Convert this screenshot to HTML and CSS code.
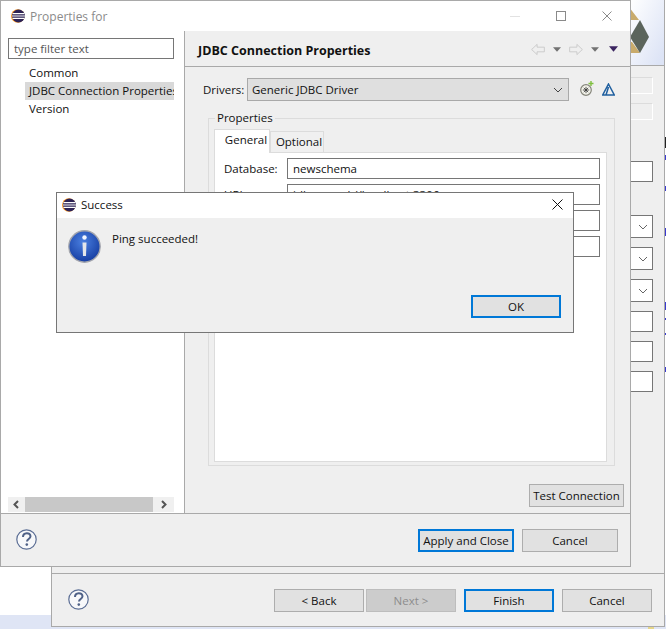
FILE: index.html
```html
<!DOCTYPE html>
<html lang="en">
<head>
  <meta charset="UTF-8" />
  <title>Properties for</title>
  <link rel="stylesheet" href="styles.css">
</head>
<body>
  <svg class="defs" width="0" height="0">
    <defs>
      <symbol id="eclipse" viewBox="0 0 14 14">
        <circle cx="6.8" cy="7" r="6.8" fill="#f7941e"/>
        <circle cx="7.5" cy="7" r="6.5" fill="#2c2255"/>
        <path d="M1.5 4.6h12M1 7h13M1.5 9.4h12" stroke="#fff" stroke-width="1.1"/>
      </symbol>
      <symbol id="help" viewBox="0 0 21 21">
        <circle cx="10.5" cy="10.5" r="9.7" fill="#f7f8fa" stroke="#5a6d94" stroke-width="1.2"/>
        <path d="M7 8c0-5 7.500-5 7.500-.7 0 2.700-3.500 2.700-3.500 5.200" fill="none" stroke="#4f6187" stroke-width="2"/>
        <circle cx="10.800" cy="15.600" r="1.300" fill="#4f6187"/>
      </symbol>
    </defs>
  </svg>

  <!-- Things peeking out behind the windows -->
  <div class="edge-bits"></div>
  <div class="tray-bit"></div>

  <!-- Wizard behind -->
  <div class="wizard">
    <div class="banner">
      <svg width="40" height="65" viewBox="0 0 40 65">
        <path d="M6 7l10 13H6zM6 42h3l8 11H6z" fill="#c9ab6c"/>
        <path d="M17 20l9 17-9 16-10-16z" fill="#5b645c"/>
      </svg>
    </div>
    <div class="wizard-body">
      <div class="wizard-fields">
        <span class="stub stub-off"></span>
        <span class="stub stub-off"></span>
        <span class="stub stub-first"></span>
        <span class="stub stub-combo"><svg width="10" height="6" viewBox="0 0 10 6"><path d="M1 1l4 4 4-4" fill="none" stroke="#666"/></svg></span>
        <span class="stub stub-combo"><svg width="10" height="6" viewBox="0 0 10 6"><path d="M1 1l4 4 4-4" fill="none" stroke="#666"/></svg></span>
        <span class="stub stub-combo"><svg width="10" height="6" viewBox="0 0 10 6"><path d="M1 1l4 4 4-4" fill="none" stroke="#666"/></svg></span>
        <span class="stub"></span>
        <span class="stub"></span>
        <span class="stub"></span>
      </div>
    </div>
    <div class="wizard-footer">
      <svg class="help"><use href="#help"/></svg>
      <div class="wizard-buttons">
        <button class="btn wiz-btn back-btn">&lt; Back</button>
        <button class="btn wiz-btn next-btn">Next &gt;</button>
        <button class="btn wiz-btn default finish-btn">Finish</button>
        <button class="btn wiz-btn">Cancel</button>
      </div>
    </div>
  </div>

  <!-- Properties dialog -->
  <div class="props">
    <div class="titlebar">
      <svg class="app-icon"><use href="#eclipse"/></svg>
      <span class="title-dim">Properties for</span>
      <div class="win-controls">
        <svg width="10" height="10" viewBox="0 0 10 10"><path d="M0 5.500h10" stroke="#e2e2e2"/></svg>
        <svg width="10" height="10" viewBox="0 0 10 10"><rect x=".5" y=".5" width="9" height="9" fill="none" stroke="#8a8a8a"/></svg>
        <svg width="10" height="10" viewBox="0 0 10 10"><path d="M.5.500l9 9M9.500.500l-9 9" stroke="#8a8a8a"/></svg>
      </div>
    </div>

    <div class="props-main">
      <div class="sidebar">
        <input class="filter" type="text" value="type filter text" />
        <ul class="tree">
          <li>Common</li>
          <li class="selected">JDBC Connection Properties</li>
          <li>Version</li>
        </ul>
        <div class="hscroll">
          <svg width="17" height="15" viewBox="0 0 17 15"><path d="M10 4L6.500 7.500 10 11" fill="none" stroke="#555" stroke-width="2"/></svg>
          <div class="hscroll-thumb"></div>
          <svg width="21" height="15" viewBox="0 0 21 15"><path d="M9 4l3.500 3.500L9 11" fill="none" stroke="#555" stroke-width="2"/></svg>
        </div>
      </div>

      <div class="page">
        <div class="page-head">
          <h1>JDBC Connection Properties</h1>
          <div class="nav-icons">
            <svg width="14" height="13" viewBox="0 0 15 13"><path d="M.7 6.500L6.500 1v3h7.800v5H6.500v3z" fill="none" stroke="#c9c9c9"/></svg>
            <svg class="tri" width="8" height="5" viewBox="0 0 9 5"><path d="M0 0h9L4.500 5z" fill="#727272"/></svg>
            <svg width="14" height="13" viewBox="0 0 15 13"><path d="M14.300 6.500L8.500 1v3H.7v5h7.800v3z" fill="none" stroke="#c9c9c9"/></svg>
            <svg class="tri" width="8" height="5" viewBox="0 0 9 5"><path d="M0 0h9L4.500 5z" fill="#727272"/></svg>
            <svg class="tri tri-last" width="9" height="6" viewBox="0 0 10 6"><path d="M0 0h10L5 6z" fill="#3b2560"/></svg>
          </div>
        </div>

        <div class="page-body">
          <div class="driver-row">
            <label>Drivers:</label>
            <div class="combo">
              <span>Generic JDBC Driver</span>
              <svg width="10" height="6" viewBox="0 0 10 6"><path d="M1 1l4 4 4-4" fill="none" stroke="#444"/></svg>
            </div>
            <svg class="driver-add" width="14" height="15" viewBox="0 0 14 15">
              <circle cx="6" cy="9" r="5.300" fill="#f4f4ec" stroke="#85857a" stroke-width="1.200"/>
              <path d="M6 5.800v6.400M2.800 9h6.400M3.800 6.800l4.400 4.400M8.200 6.800l-4.400 4.400" stroke="#333" stroke-width=".8"/>
              <path d="M11 0v5M8.500 2.500h5" stroke="#7fbf3f" stroke-width="1.400"/>
            </svg>
            <svg class="driver-edit" width="13" height="13" viewBox="0 0 13 13"><path d="M6.500 1L12.300 12H.7zM6.500 4L4 12" fill="none" stroke="#1f5f9f" stroke-width="1.500"/></svg>
          </div>

          <fieldset class="group">
            <legend>Properties</legend>
            <div class="tabs">
              <span class="tab active">General</span>
              <span class="tab">Optional</span>
            </div>
            <div class="tab-panel">
              <div class="form">
                <label>Database:</label><input type="text" value="newschema" />
                <label>URL:</label><input type="text" value="jdbc:mysql://localhost:3306" />
                <label>User name:</label><input type="text" />
                <label>Password:</label><input type="text" />
              </div>
            </div>
          </fieldset>

          <div class="test-row">
            <button class="btn test-btn">Test Connection</button>
          </div>
        </div>
      </div>
    </div>

    <div class="props-footer">
      <svg class="help"><use href="#help"/></svg>
      <div class="props-buttons">
        <button class="btn dlg-btn default">Apply and Close</button>
        <button class="btn dlg-btn">Cancel</button>
      </div>
    </div>
  </div>

  <!-- Message box -->
  <div class="msgbox">
    <div class="msg-title">
      <svg class="app-icon"><use href="#eclipse"/></svg>
      <span>Success</span>
      <svg class="msg-close" width="11" height="11" viewBox="0 0 11 11"><path d="M.5.500l10 10M10.500.500l-10 10" stroke="#111"/></svg>
    </div>
    <div class="msg-body">
      <div class="msg-row">
        <svg width="33" height="33" viewBox="0 0 33 33">
          <defs>
            <radialGradient id="infoBlue" cx="45%" cy="35%" r="70%">
              <stop offset="0" stop-color="#4a7fe0"/>
              <stop offset="1" stop-color="#12399e"/>
            </radialGradient>
          </defs>
          <circle cx="16.500" cy="16.500" r="15.700" fill="url(#infoBlue)" stroke="#a4a6ad" stroke-width="1.400"/>
          <circle cx="16.500" cy="7.500" r="2.200" fill="#f3f6ff"/>
          <path d="M14.500 12.500h4l-.5 13.500h-3z" fill="#e4e6ea"/>
        </svg>
        <p>Ping succeeded!</p>
      </div>
      <div class="msg-buttons">
        <button class="btn wiz-btn default">OK</button>
      </div>
    </div>
  </div>
</body>
</html>
```

FILE: styles.css
```css
* {
  box-sizing: border-box;
}
html, body {
  margin: 0;
  height: 100%;
}
body {
  position: relative;
  width: 666px;
  height: 629px;
  overflow: hidden;
  font-family: "Open Sans", "Noto Sans", Arial, sans-serif;
  font-size: 11.5px;
  color: #111;
  background: linear-gradient(#fff 615px, #dfe5f5 615px);
}
.defs {
  position: absolute;
}
.edge-bits {
  position: absolute;
  left: 665px;
  top: 0;
  width: 1px;
  height: 400px;
  background: linear-gradient(#fff 137px, #222 137px, #222 148px, #fff 148px,
    #fff 155px, #3a3ad0 155px, #3a3ad0 160px, #fff 160px,
    #fff 186px, #3a3ad0 186px, #3a3ad0 191px, #fff 191px,
    #fff 228px, #3a3ad0 228px, #3a3ad0 236px, #fff 236px,
    #fff 302px, #3a3ad0 302px, #3a3ad0 310px, #fff 310px,
    #fff 318px, #3a3ad0 318px, #3a3ad0 320px, #fff 320px,
    #fff 333px, #3a3ad0 333px, #3a3ad0 335px, #fff 335px,
    #fff 367px, #3a3ad0 367px, #3a3ad0 372px, #fff 372px);
}
.tray-bit {
  position: absolute;
  left: 648px;
  top: 626px;
  width: 6px;
  height: 3px;
  background: #e6d68a;
}

/* windows */
.wizard {
  position: absolute;
  left: 51px;
  top: 0;
  width: 614px;
  height: 627px;
  display: flex;
  flex-direction: column;
  background: #efefef;
  border: 1px solid #a9a9a9;
  border-top: 0;
}
.props {
  position: absolute;
  left: 0;
  top: 0;
  width: 631px;
  height: 567px;
  display: flex;
  flex-direction: column;
  background: #efefef;
  border: 1px solid #a9a9a9;
}
.msgbox {
  position: absolute;
  left: 56px;
  top: 192px;
  width: 518px;
  height: 141px;
  display: flex;
  flex-direction: column;
  background: #efefef;
  border: 1px solid #767676;
}

/* wizard behind */
.banner {
  height: 66px;
  flex: none;
  display: flex;
  justify-content: flex-end;
  padding-right: 1px;
  border-bottom: 1px solid #a9a9a9;
  background: linear-gradient(115deg, #fff 90%, #dde4f6 99%);
}
.wizard-body {
  flex: 1;
  display: flex;
  justify-content: flex-end;
}
.wizard-fields {
  width: 22px;
  margin-right: 11px;
  display: flex;
  flex-direction: column;
}
.stub {
  height: 21px;
  margin-bottom: 9px;
  flex: none;
  display: flex;
  align-items: center;
  justify-content: flex-end;
  padding-right: 4px;
  background: #fff;
  border: 1px solid #767676;
  border-left: 0;
}
.stub-off {
  height: 17px;
  margin-top: 11px;
  margin-bottom: -2px;
  background: transparent;
  border: 0;
  border-top: 1px solid #dcdcdc;
  border-right: 1px solid #fff;
  border-bottom: 1px solid #fff;
}
.stub-first {
  margin-top: 43px;
  margin-bottom: 33px;
}
.stub-combo {
  height: 23px;
}
.wizard-footer {
  height: 53px;
  flex: none;
  display: flex;
  align-items: flex-start;
  justify-content: space-between;
  padding: 15px 12px 0 16px;
  border-top: 1px solid #a9a9a9;
}
.wizard-buttons {
  display: flex;
}
.back-btn {
  margin-right: 2px;
}
.finish-btn {
  margin-right: 8px;
}

/* title bars */
.titlebar {
  height: 30px;
  flex: none;
  display: flex;
  align-items: center;
  padding-left: 10px;
  background: #fff;
  font-size: 12px;
}
.app-icon {
  width: 14px;
  height: 14px;
  margin-right: 5px;
  flex: none;
}
.title-dim {
  color: #8b8b8b;
}
.win-controls {
  margin-left: auto;
  display: flex;
  gap: 36px;
  padding-right: 18px;
}

/* properties main */
.props-main {
  flex: 1;
  min-height: 0;
  display: flex;
}
.sidebar {
  width: 184px;
  flex: none;
  display: flex;
  flex-direction: column;
  padding: 7px 10px 0 7px;
  background: #fff;
  border-right: 1px solid #a9a9a9;
}
.filter {
  width: 166px;
  height: 21px;
  padding: 0 5px;
  border: 1px solid #767676;
  font: inherit;
  color: #555;
}
.tree {
  flex: 1;
  margin: 5px 0 0;
  padding: 0 0 0 17px;
  list-style: none;
}
.tree li {
  height: 18px;
  line-height: 18px;
  padding-left: 4px;
  white-space: nowrap;
  overflow: hidden;
}
.tree .selected {
  background: #d9d9d9;
}
.hscroll {
  height: 15px;
  display: flex;
  background: #f0f0f0;
  margin-bottom: 1px;
}
.hscroll-thumb {
  flex: 1;
  background: #c8c8c8;
}
.page {
  flex: 1;
  display: flex;
  flex-direction: column;
}
.page-head {
  height: 36px;
  flex: none;
  display: flex;
  align-items: center;
  justify-content: space-between;
  padding: 4px 12px 0 13px;
  border-bottom: 1px solid #a9a9a9;
}
h1 {
  margin: 0;
  font-size: 12.500px;
  font-weight: 700;
}
.nav-icons {
  display: flex;
  align-items: center;
  gap: 8px;
  margin-top: -3px;
}
.nav-icons .tri-last {
  margin-left: 2px;
}
.page-body {
  flex: 1;
  display: flex;
  flex-direction: column;
  padding: 11px 6px 6px 18px;
}
.driver-row {
  display: flex;
  align-items: center;
  height: 23px;
  flex: none;
}
.driver-row label {
  width: 44px;
  flex: none;
}
.combo {
  width: 322px;
  height: 23px;
  display: flex;
  align-items: center;
  justify-content: space-between;
  padding: 0 5px 0 4px;
  background: #dfdfdf;
  border: 1px solid #a9a9a9;
}
.driver-add {
  margin: -3px 0 0 11px;
}
.driver-edit {
  margin: 0 0 0 8px;
}

/* properties group */
.group {
  width: 407px;
  height: 356px;
  flex: none;
  margin: 9px 0 0 5px;
  padding: 0 7px 4px 5px;
  border: 1px solid #dcdcdc;
}
.group legend {
  padding: 0 2px;
  margin-left: 1px;
  line-height: 16px;
}
.tabs {
  display: flex;
  align-items: flex-end;
  height: 23px;
  margin-top: 3px;
}
.tab {
  width: 54px;
  height: 21px;
  line-height: 20px;
  padding-left: 4px;
  text-align: center;
  background: #f0f0f0;
  border: 1px solid #dcdcdc;
  border-bottom: 0;
}
.tab.active {
  width: 56px;
  height: 24px;
  line-height: 19px;
  padding-left: 8px;
  background: #fff;
  margin-bottom: -1px;
  position: relative;
  z-index: 1;
}
.tab-panel {
  height: 310px;
  background: #fff;
  border: 1px solid #dcdcdc;
  padding: 5px 6px 0 9px;
}
.form {
  display: grid;
  grid-template-columns: 63px 313px;
  row-gap: 5px;
  align-items: center;
}
.form input {
  height: 21px;
  padding: 0 5px;
  border: 1px solid #767676;
  font: inherit;
  color: #111;
  width: 100%;
}
.test-row {
  display: flex;
  justify-content: flex-end;
  margin-top: 18px;
}

/* buttons */
.btn {
  height: 23px;
  padding: 0;
  background: #e1e1e1;
  border: 1px solid #adadad;
  font: inherit;
  color: #111;
}
.btn.default {
  border: 2px solid #0078d7;
}
.btn.next-btn {
  background: #cccccc;
  border-color: #bdbdbd;
  color: #8d8d8d;
  margin-right: 8px;
}
.wiz-btn {
  width: 90px;
}
.dlg-btn {
  width: 96px;
}
.test-btn {
  width: 95px;
}
.props-footer {
  height: 53px;
  flex: none;
  display: flex;
  align-items: flex-start;
  justify-content: space-between;
  padding: 15px 12px 0 15px;
  border-top: 1px solid #a9a9a9;
}
.props-buttons {
  display: flex;
  gap: 8px;
}
.help {
  width: 21px;
  height: 21px;
}

/* message box */
.msg-title {
  height: 25px;
  flex: none;
  display: flex;
  align-items: center;
  padding: 0 0 2px 5px;
  background: #fff;
}
.msg-close {
  margin-left: auto;
  margin-right: 10px;
}
.msg-body {
  flex: 1;
  display: flex;
  flex-direction: column;
  justify-content: space-between;
  padding: 12px 12px 14px 11px;
}
.msg-row {
  display: flex;
  align-items: flex-start;
  gap: 11px;
}
.msg-row p {
  margin: 1px 0 0;
}
.msg-buttons {
  display: flex;
  justify-content: flex-end;
}
```
